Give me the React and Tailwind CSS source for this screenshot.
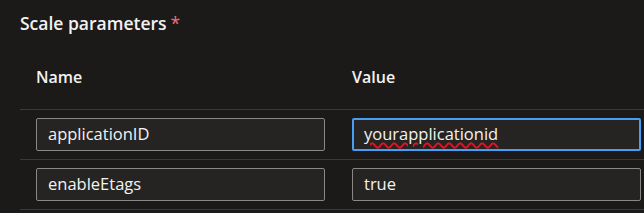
import React from "react";

const font = { fontFamily: '"Open Sans", "Noto Sans", sans-serif' };

function Field({ text, focused, squiggle }) {
  return (
    <div
      className={
        "h-[33px] w-[289px] rounded-[2px] bg-[#252423] flex items-center text-[16.5px] text-[#f3f2f1] " +
        (focused ? "border-2 border-[#479ef5] pl-[10px]" : "border border-[#8a8886] pl-[11px]")
      }
    >
      <span
        className={
          squiggle
            ? "underline decoration-wavy decoration-[#e81123] underline-offset-[2px] decoration-[1.5px]"
            : ""
        }
      >
        {text}
      </span>
    </div>
  );
}

export default function App() {
  const rows = [
    { name: "applicationID", value: "yourapplicationid", focused: true, squiggle: true },
    { name: "enableEtags", value: "true" },
  ];
  return (
    <div className="w-[644px] h-[213px] bg-[#1b1a19] overflow-hidden" style={font}>
      <div className="pl-5 pt-[11px] h-[66px]">
        <div className="text-[17.5px] leading-[24px] font-semibold text-[#f3f2f1]">
          Scale parameters<span className="text-[#f1707b] ml-[4px] font-normal">*</span>
        </div>
      </div>
      <div className="ml-5 w-[640px]">
        <div className="flex h-[44px] border-b border-[#3b3a39] text-[16px] leading-[22px] font-semibold text-[#f3f2f1]">
          <div className="w-[316px] pl-4">Name</div>
          <div className="w-[316px] pl-4">Value</div>
        </div>
        {rows.map((r) => (
          <div key={r.name} className="flex h-[50px] items-center border-b border-[#3b3a39]">
            <div className="w-[316px] pl-4">
              <Field text={r.name} />
            </div>
            <div className="w-[316px] pl-4">
              <Field text={r.value} focused={r.focused} squiggle={r.squiggle} />
            </div>
          </div>
        ))}
      </div>
    </div>
  );
}
